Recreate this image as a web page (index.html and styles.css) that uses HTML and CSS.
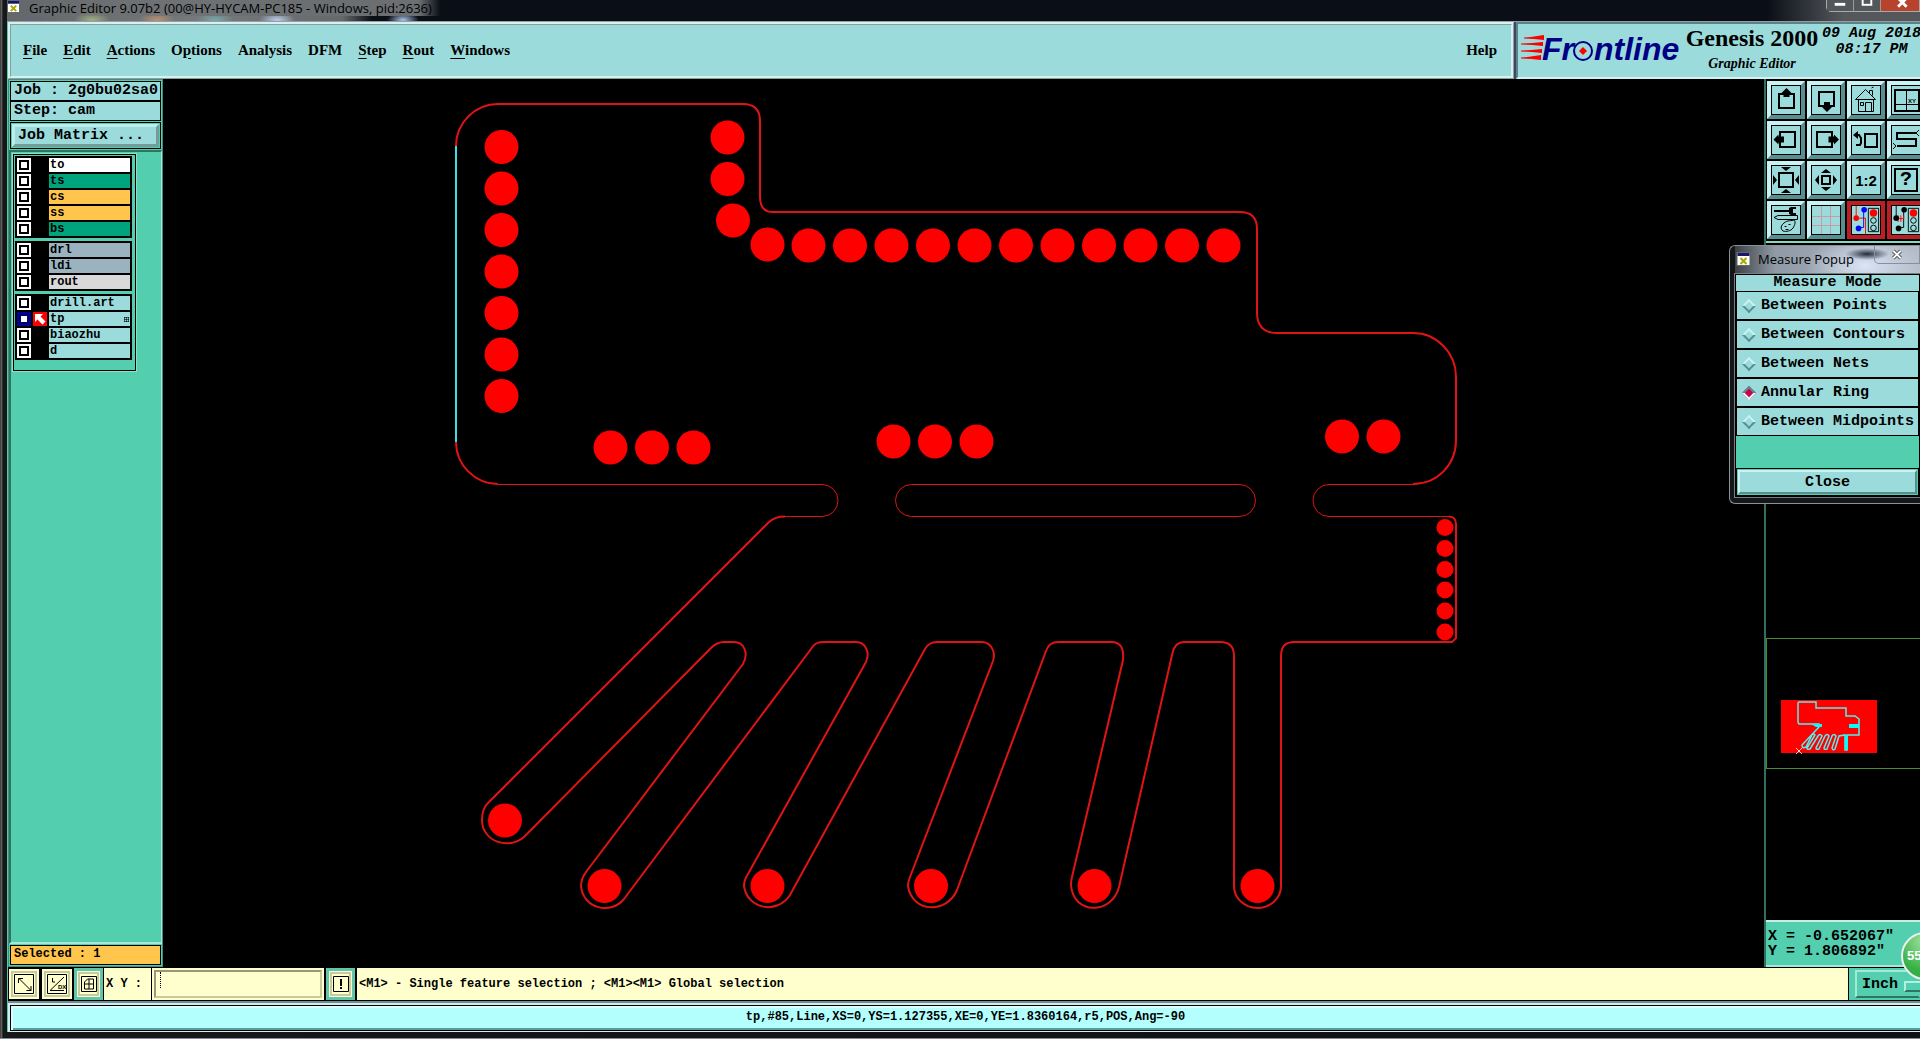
FILE: index.html
```
<!DOCTYPE html>
<html lang="en">
<head>
  <meta charset="UTF-8">
  <meta name="viewport" content="width=device-width, initial-scale=1.0">
  <title>Graphic Editor 9.07b2</title>
  <link rel="stylesheet" href="styles.css">
</head>
<body>
  <div class="window">
    <div class="title-bar">
      <svg class="app-icon" viewBox="0 0 14 14"><rect x="0.5" y="0.5" width="13" height="13" fill="#fff" stroke="#666"/><rect x="1" y="1" width="12" height="3" fill="#16166e"/><path d="M4 6l6 6M10 6l-6 6" stroke="#a8a800" stroke-width="2"/></svg>
      <span class="title">Graphic Editor 9.07b2 (00@HY-HYCAM-PC185 - Windows, pid:2636)</span>
      <div class="window-buttons">
        <button aria-label="Minimize"><svg viewBox="0 0 27 11"><rect x="8" y="3" width="11" height="3" fill="#fff"/></svg></button>
        <button aria-label="Maximize"><svg viewBox="0 0 27 11"><rect x="9" y="-3" width="9" height="8" fill="none" stroke="#fff" stroke-width="2"/></svg></button>
        <button class="window-close" aria-label="Close window"><svg viewBox="0 0 40 11"><path d="M18-2l9 9M27-2l-9 9" stroke="#fff" stroke-width="3"/></svg></button>
      </div>
    </div>

    <div class="frame">
      <header class="top">
        <nav class="menu">
          <button><u>F</u>ile</button>
          <button><u>E</u>dit</button>
          <button><u>A</u>ctions</button>
          <button>O<u>p</u>tions</button>
          <button>Analysis</button>
          <button>DFM</button>
          <button><u>S</u>tep</button>
          <button><u>R</u>out</button>
          <button><u>W</u>indows</button>
          <button class="help">Help</button>
        </nav>
        <div class="brand">
          <svg class="logo" viewBox="0 0 164 50">
            <path d="M4 14l20-3v5zM1 20l22-2v4zM1 27l21-2v4zM1 34l20-3v5z" fill="#f00"/>
            <path d="M4 14h16M1 20h16M1 27h16M1 34h16" stroke="#f00"/>
            <text x="22" y="36">Fr</text>
            <circle cx="63" cy="27" r="9" fill="none" stroke="#000084" stroke-width="2"/>
            <path d="M63 23l4 4-4 4-4-4z" fill="#f00"/>
            <text x="74" y="36">ntline</text>
          </svg>
          <div class="product">
            <h1>Genesis 2000</h1>
            <p>Graphic Editor</p>
          </div>
          <div class="clock">09 Aug 2018<br>08:17 PM</div>
        </div>
      </header>

      <div class="work">
        <aside class="sidebar">
          <div class="job">
            <div class="field">Job : 2g0bu02sa0</div>
            <div class="field">Step: cam</div>
          </div>
          <div class="matrix"><button>Job Matrix ...</button></div>
          <div class="layer-area">
            <div class="layers">
              <div class="group">
                <label class="layer white"><input type="checkbox"><i></i><span>to</span></label>
                <label class="layer green"><input type="checkbox"><i></i><span>ts</span></label>
                <label class="layer orange"><input type="checkbox"><i></i><span>cs</span></label>
                <label class="layer orange"><input type="checkbox"><i></i><span>ss</span></label>
                <label class="layer green"><input type="checkbox"><i></i><span>bs</span></label>
              </div>
              <div class="group">
                <label class="layer gray"><input type="checkbox"><i></i><span>drl</span></label>
                <label class="layer gray"><input type="checkbox"><i></i><span>ldi</span></label>
                <label class="layer silver"><input type="checkbox"><i></i><span>rout</span></label>
              </div>
              <div class="group">
                <label class="layer"><input type="checkbox"><i></i><span>drill.art</span></label>
                <label class="layer work-layer"><input type="checkbox" checked><i><svg viewBox="0 0 14 14"><path d="M2 2h8L7.500 4.500l5 5-3 3-5-5L2 10z" fill="#fff"/></svg></i><span>tp<svg class="mark" viewBox="0 0 5 5"><path d="M0 0.500h5M0 2.500h5M0 4.500h5M0.500 0v5M2.500 0v5M4.500 0v5" stroke="#000" stroke-width="0.600"/></svg></span></label>
                <label class="layer"><input type="checkbox"><i></i><span>biaozhu</span></label>
                <label class="layer"><input type="checkbox"><i></i><span>d</span></label>
              </div>
            </div>
          </div>
          <div class="selected"><div>Selected : 1</div></div>
        </aside>

        <main class="canvas">
          <svg class="board" viewBox="163 79 1601 888">
            <g class="outline">
              <path d="M456 146C456 123 475 104 498 104H743Q760 104 760 121V197Q760 212 773 212H1240Q1257 212 1257 229V314Q1258 333 1277 333H1413C1437 333 1456 353 1456 377V440C1456 465 1437 484 1413 484"/>
              <path class="thin" d="M1413 484.500H1329A16 16 0 0 0 1329 516.500H1449"/>
              <path d="M1449 516.500Q1456 517 1456 524V638L1452 642H1294Q1281 642 1281 656V886A23.500 22 0 0 1 1234 886V656Q1234 642 1220 642H1184Q1175 642 1172.500 653L1119 887C1112 915 1073 915 1071 885Q1071 880 1072 877L1123 660C1124 650 1122 642 1111 642H1058Q1049 642 1046 651L957 890C947 914 912 913 908 886Q908 882 910 877L993 661C996 652 991 642 982 642H937Q929 642 925 649L790 895C777 915 747 909 744 886Q744 880 748 874L866 662C870 653 866 642 856 642H822Q815 642 811 649L624 899C611 915 583 909 581 886Q581 879 586 872L743 664C749 653 744 642 734 642H724Q717 642 711 648L524 837C509 850 482 842 482 820Q482 808 489 802L769 522Q775 516.500 785 516.500"/>
              <path class="thin" d="M785 516.500H822A16 16 0 0 0 822 484.500H498"/>
              <path d="M498 484C475 484 456 465 456 442"/>
              <rect class="thin" x="895.500" y="484.500" width="360" height="32" rx="16"/>
              <path class="picked" d="M456 146V442"/>
            </g>
            <g class="pads">
              <circle cx="501.500" cy="147" r="17"/><circle cx="501.500" cy="188.500" r="17"/><circle cx="501.500" cy="230" r="17"/><circle cx="501.500" cy="271.500" r="17"/><circle cx="501.500" cy="313" r="17"/><circle cx="501.500" cy="354.500" r="17"/><circle cx="501.500" cy="396" r="17"/>
              <circle cx="727.500" cy="137.500" r="17"/><circle cx="727.500" cy="179" r="17"/><circle cx="733" cy="220.500" r="17"/>
              <circle cx="767.500" cy="244.500" r="17"/><circle cx="808.500" cy="245.500" r="17"/><circle cx="850" cy="245.500" r="17"/><circle cx="891.500" cy="245.500" r="17"/><circle cx="933" cy="245.500" r="17"/><circle cx="974.500" cy="245.500" r="17"/><circle cx="1016" cy="245.500" r="17"/><circle cx="1057.500" cy="245.500" r="17"/><circle cx="1099" cy="245.500" r="17"/><circle cx="1140.500" cy="245.500" r="17"/><circle cx="1182" cy="245.500" r="17"/><circle cx="1223.500" cy="245.500" r="17"/>
              <circle cx="610.500" cy="447.500" r="17"/><circle cx="652" cy="447.500" r="17"/><circle cx="693.500" cy="447.500" r="17"/>
              <circle cx="893.500" cy="441.500" r="17"/><circle cx="935" cy="441.500" r="17"/><circle cx="976.500" cy="441.500" r="17"/>
              <circle cx="1342" cy="436.500" r="17"/><circle cx="1383.500" cy="436.500" r="17"/>
              <circle cx="1445" cy="527.500" r="8.500"/><circle cx="1445" cy="548.500" r="8.500"/><circle cx="1445" cy="569.500" r="8.500"/><circle cx="1445" cy="590" r="8.500"/><circle cx="1445" cy="611" r="8.500"/><circle cx="1445" cy="632" r="8.500"/>
              <circle cx="505" cy="820.500" r="17"/><circle cx="604.500" cy="886" r="17"/><circle cx="767.500" cy="886" r="17"/><circle cx="931" cy="886" r="17"/><circle cx="1094.500" cy="886" r="17"/><circle cx="1257.500" cy="886" r="17"/>
            </g>
          </svg>
        </main>

        <aside class="right">
          <div class="tools">
            <button aria-label="Pan up"><svg viewBox="0 0 28 28"><path class="k2" d="M7 8h15v14H7z"/><path d="M14.500 2l5 5h-2v4h-6V7h-2z"/></svg></button>
            <button aria-label="Pan down"><svg viewBox="0 0 28 28"><path class="k2" d="M7 6h15v14H7z"/><path d="M12 16h6v5h2l-5 5-5-5h2z"/></svg></button>
            <button aria-label="Home"><svg viewBox="0 0 28 28"><path class="k1" d="M3.500 13.500L13.500 3.500l10 10zM6.500 13v12.500h15V13M13.500 25V16.500h6V25M8.500 16.500h3v3h-3zM17.500 7V4.500h3v5M19.500 2l2-1"/></svg></button>
            <button aria-label="Window zoom"><svg viewBox="0 0 28 28"><path class="k2" d="M3 4h24v21H3z"/><path class="k1" d="M14.500 4v21M3 18.500h24"/><text x="16" y="17" font-size="6">XY</text></svg></button>
            <button aria-label="Pan left"><svg viewBox="0 0 28 28"><path class="k2" d="M8 6h15v15H8z"/><path d="M1.500 13.500l5-5v2H12v6H6.500v2z"/></svg></button>
            <button aria-label="Pan right"><svg viewBox="0 0 28 28"><path class="k2" d="M5 6h15v15H5z"/><path d="M27 13.500l-5-5v2h-5.500v6H22v2z"/></svg></button>
            <button aria-label="Previous view"><svg viewBox="0 0 28 28"><path class="k2" d="M13 8h12v13H13zM4 19h4l1-2v-5l-2-3H4"/><path d="M1 9l5-4v8z"/></svg></button>
            <button aria-label="Serpentine"><svg viewBox="0 0 28 28"><path class="k2" d="M24 7H5v6h19v7H5"/><path class="k1" d="M27 4l-3 3 3 3M1 17l3 3-3 3"/></svg></button>
            <button aria-label="Zoom in"><svg viewBox="0 0 28 28"><path class="k2" d="M7 7h14v14H7z"/><path d="M9 1h10l-5 4zM9 27h10l-5-4zM1 9l4 5-4 5zM27 9l-4 5 4 5z"/></svg></button>
            <button aria-label="Zoom out"><svg viewBox="0 0 28 28"><path class="k2" d="M10 10h8v8h-8z"/><path d="M9 7h10l-5-4zM9 21h10l-5 4zM7 9v10l-4-5zM21 9v10l4-5z"/></svg></button>
            <button class="ratio">1:2</button>
            <button class="query"><span>?</span></button>
            <button aria-label="Setup"><svg viewBox="0 0 28 28"><path d="M2 4h16v2H2zM17 2l2-1h5v2h-3v4h3v2h-5l-2-1z"/><path class="k1" d="M2 11.500l4-2h19.500v4H6z"/><path class="k1" d="M12 17c3-3 8-2 10-3 2 1 1 5-1 8-2 3-7 4-10 3-3-2-2-6 1-8zM12.500 20.500h2M16.500 18.500h2M13.500 23.500h3"/></svg></button>
            <button aria-label="Grid"><svg viewBox="0 0 28 28"><path d="M9.500 0v28M18.500 0v28M0 10.500h28M0 19.500h28" stroke="#c99ba6"/></svg></button>
            <button class="hot" aria-label="Net check"><svg viewBox="0 0 30 30"><path d="M4.500 0v13h10v17" fill="none" stroke="#f00"/><path d="M12.500 5v18H7" fill="none" stroke="#00f"/><circle cx="4.500" cy="13" r="3" fill="#f00"/><circle cx="13" cy="4" r="3" fill="#00f"/><circle cx="7" cy="24" r="3" fill="#00f"/><path class="k1" d="M17.500 2.500h11v25h-11z"/><circle cx="23" cy="7.500" r="4" fill="#f00"/><circle class="k1" cx="23" cy="15.500" r="3"/><circle class="k1" cx="23" cy="23.500" r="3"/></svg></button>
            <button class="hot" aria-label="Drc check"><svg viewBox="0 0 30 30"><path class="k1" d="M4.500 0v13M12.500 5v18H7"/><path d="M4 13.500h9M6.500 10v7M9.500 10v7M12.500 10v3" stroke="#f00" fill="none"/><circle cx="4.500" cy="13" r="3"/><circle cx="13" cy="4" r="3"/><circle cx="7" cy="24" r="3"/><path class="k1" d="M17.500 2.500h11v25h-11z"/><circle cx="23" cy="7.500" r="4" fill="#f00"/><circle class="k1" cx="23" cy="15.500" r="3"/><circle class="k1" cx="23" cy="23.500" r="3"/></svg></button>
          </div>
          <div class="overview">
            <div class="map">
              <svg viewBox="0 0 96 53">
                <path d="M0 0h96v53H0z" fill="#f00"/>
                <path d="M18 2h17v6h30v8h9l4 3v16H66v15h-2V35l-6 1-4 13q-2 2-3-1l4-12q-2-3-4 0l-5 13q-3 1-3-1l5-12q-2-3-4 0l-6 13q-3 1-3-1l6-12q-2-3-4 0l-8 13q-3 1-3-1l8-13q-1-2-3 0L25 47q-4 2-4-2l17-18v-3H18l-1-2V3z" fill="none" stroke="#5ee" stroke-width="1.500"/>
                <path d="M30 24h11v3h-6M68 24h10v4H68zM64 35h3v15h-3z" fill="#0ff"/>
                <path d="M15 48l6 6M21 48l-6 6" stroke="#fff" stroke-width="0.800"/>
              </svg>
            </div>
          </div>
          <div class="coords">X = -0.652067"<br>Y = 1.806892"</div>
        </aside>
      </div>

      <div class="command">
        <button class="cmd" aria-label="Snap"><svg viewBox="0 0 20 20"><path class="k1" d="M0.500 0.500h19v19H0.500zM5 4.500l12 12M4.500 9V4.500H9M17 12v4.500h-4.500"/></svg></button>
        <button class="cmd" aria-label="Angle"><svg viewBox="0 0 20 20"><path class="k1" d="M0.500 0.500h19v19H0.500zM17 3L3 16.500h14M5.500 4v4H8"/><text x="11" y="15" font-size="6">DX</text></svg></button>
        <button class="cmd framed" aria-label="Grid snap"><svg viewBox="0 0 16 16"><path class="k1" d="M0.500 0.500h15v15H0.500zM3.500 6l3-3h6v10h-9zM8 3v10M3.500 8h9"/></svg></button>
        <label class="xy" for="xy">X Y :</label>
        <div class="entry"><input id="xy" type="text"><i class="caret"></i></div>
        <button class="cmd framed bang" aria-label="Interrupt"><svg viewBox="0 0 16 16"><path class="k1" d="M0.500 0.500h15v15H0.500z"/><path d="M7 3h2v7H7zM7 11h2v2H7z"/></svg></button>
        <div class="message">&lt;M1&gt; - Single feature selection ; &lt;M1&gt;&lt;M1&gt; Global selection</div>
        <div class="unit"><select aria-label="Units"><option>Inch</option><option>MM</option></select></div>
      </div>

      <footer class="status"><div>tp,#85,Line,XS=0,YS=1.127355,XE=0,YE=1.8360164,r5,POS,Ang=-90</div></footer>
    </div>

    <section class="popup">
      <div class="popup-title">
        <svg class="app-icon" viewBox="0 0 14 14"><rect x="0.500" y="0.500" width="13" height="13" fill="#fff" stroke="#666"/><rect x="1" y="1" width="12" height="3" fill="#16166e"/><path d="M4 6l6 6M10 6l-6 6" stroke="#a8a800" stroke-width="2"/></svg>
        <span>Measure Popup</span>
        <button aria-label="Close popup"><svg viewBox="0 0 12 12"><path d="M2 2l8 8M10 2l-8 8" stroke="#555" stroke-width="4"/><path d="M2 2l8 8M10 2l-8 8" stroke="#fff" stroke-width="2"/></svg></button>
      </div>
      <div class="popup-body">
        <h2>Measure Mode</h2>
        <label class="mode"><input type="radio" name="mode">Between Points</label>
        <label class="mode"><input type="radio" name="mode">Between Contours</label>
        <label class="mode"><input type="radio" name="mode">Between Nets</label>
        <label class="mode"><input type="radio" name="mode" checked>Annular Ring</label>
        <label class="mode"><input type="radio" name="mode">Between Midpoints</label>
        <div class="popup-close"><button>Close</button></div>
      </div>
    </section>

    <div class="bubble">55</div>
  </div>
</body>
</html>
```
FILE: styles.css
```
* {
  box-sizing: border-box;
}
body {
  margin: 0;
  background: #000;
  color: #000;
  font-family: "Liberation Mono", monospace;
  font-size: 15px;
  font-weight: bold;
}
button,
input,
select {
  margin: 0;
  padding: 0;
  border: none;
  background: none;
  color: inherit;
  font: inherit;
}
svg {
  display: block;
}
.k1,
.k2 {
  fill: none;
  stroke: #000;
  stroke-width: 1;
}
.k2 {
  stroke-width: 2;
}
.window {
  position: relative;
  height: 100vh;
  min-height: 600px;
  overflow: hidden;
  display: flex;
  flex-direction: column;
  padding: 0 0 6px 7px;
  background: linear-gradient(to right, #111 0, #777 1px, #151719 3px, #0d1014 100%);
  border-bottom: 1px solid #889;
}

/* title bar */
.title-bar {
  display: flex;
  gap: 9px;
  height: 22px;
  color: #000;
  font: 13px/16px "Open Sans", sans-serif;
  border-bottom: 1px solid #9a9da0;
  background:
    radial-gradient(ellipse 16px 9px at 25px 20px, #667, transparent),
    radial-gradient(ellipse 18px 8px at 85px 20px, #9fae83, transparent),
    radial-gradient(ellipse 18px 8px at 150px 20px, #b98f74, transparent),
    radial-gradient(ellipse 18px 8px at 208px 20px, #74a9a8, transparent),
    radial-gradient(ellipse 18px 8px at 270px 20px, #b9cbe8, transparent),
    radial-gradient(ellipse 16px 8px at 396px 20px, #a9c4ea, transparent),
    linear-gradient(to right, #64676a 0, #777a7c 200px, #66696c 335px, #0a0e16 365px, #0a0e16 92%, #54585c 96%);
}
.title {
  padding: 0 8px;
  margin: 0 -8px;
  background: linear-gradient(to right, transparent, #6c6f72 60%, #6c6f72 95%, transparent);
  height: 16px;
}
.app-icon {
  width: 13px;
  height: 13px;
}
.window-buttons {
  display: flex;
  height: 12px;
  margin-left: auto;
  border: 1px solid #aaa;
  border-top: none;
  border-radius: 0 0 0 5px;
}
.window-buttons button {
  width: 27px;
  border-right: 1px solid #999;
  background: #54575a;
}
.window-buttons .window-close {
  width: 38px;
  border: none;
  background: #b8432c;
}

.frame {
  flex: 1;
  min-height: 0;
  display: flex;
  flex-direction: column;
  border-left: 1px solid #56c9a9;
}

/* menu and brand */
.top {
  display: flex;
  gap: 2px;
  height: 57px;
  background: #446;
}
.menu {
  flex: 1;
  display: flex;
  align-items: center;
  gap: 16px;
  padding: 0 14px 2px 12px;
  background: #9cdbdb;
  border: 3px ridge #d5f2f2;
}
.menu button {
  font: bold 15px/18px "Liberation Serif", serif;
}
.menu u {
  text-underline-offset: 3px;
}
.menu .help {
  margin-left: auto;
}
.brand {
  display: flex;
  width: 404px;
  padding-left: 2px;
  overflow: hidden;
  white-space: nowrap;
  background: #9cdbdb;
  border: 2px solid #d5f2f2;
  border-top-color: #578487;
  border-left-color: #578487;
  border-right: none;
}
.logo {
  flex: none;
  width: 164px;
  height: 50px;
}
.logo text {
  fill: #000084;
  font: italic bold 32px "Liberation Sans", sans-serif;
}
.product {
  flex: none;
  width: 136px;
  text-align: center;
}
.product h1 {
  margin: 0;
  font: bold 24px/28px "Liberation Serif", serif;
}
.product p {
  margin: 0;
  font: italic bold 14px/24px "Liberation Serif", serif;
}
.clock {
  flex: none;
  width: 103px;
  padding-top: 2px;
  font-style: italic;
  line-height: 16px;
  text-align: center;
}

/* working area */
.work {
  flex: 1;
  min-height: 0;
  display: flex;
  background: #000;
}
.sidebar {
  width: 155px;
  display: flex;
  flex-direction: column;
  background: #53ceae;
  border: 1px solid #478b7b;
}
.job {
  padding: 1px;
}
.field {
  height: 20px;
  padding-left: 3px;
  background: #9cdbdb;
  border: 1px solid #000;
  line-height: 17px;
}
.matrix {
  height: 27px;
  margin: 0 1px;
  padding: 1px;
  border: 1px solid #000;
}
.matrix button {
  width: 100%;
  height: 23px;
  padding-left: 3px;
  background: #9cdbdb;
  border: 3px outset #b9eeee;
  line-height: 17px;
  text-align: left;
}
.layer-area {
  flex: 1;
  margin-top: 1px;
  padding: 2px;
  border-top: 2px solid #2d7561;
  border-left: 2px solid #2d7561;
  border-right: 1px solid #a4e8d7;
  border-bottom: 2px solid #a4e8d7;
}
.layers {
  width: 123px;
  padding: 1px 3px 7px 1px;
  border: 1px solid #000;
  outline: 1px solid #91dfca;
}
.group {
  width: 117px;
  margin-bottom: 3px;
  padding: 2px 2px 0;
  background: #000;
}
.layer {
  display: flex;
  gap: 2px;
  height: 16px;
  padding-bottom: 2px;
  font-size: 12px;
  line-height: 14px;
}
.layer input {
  flex: none;
  width: 14px;
  height: 14px;
  appearance: none;
  background: #fff;
  border: 2px solid #fff;
  box-shadow: inset 0 0 0 2px #000;
}
.layer i {
  flex: none;
  width: 14px;
  height: 14px;
}
.layer span {
  flex: 1;
  display: flex;
  align-items: center;
  justify-content: space-between;
  padding: 0 1px;
  background: #9cdbdb;
}
.mark {
  width: 5px;
  height: 5px;
}
.white span {
  background: #fff;
}
.green span {
  background: #00a47c;
}
.orange span {
  background: #ffc54d;
}
.gray span {
  background: #9bb3bf;
}
.silver span {
  background: #d9d9d9;
}
.work-layer input {
  border-color: #000099;
  box-shadow: inset 0 0 0 2px #000066;
}
.work-layer i {
  background: #f00;
}
.selected {
  padding: 1px;
  font-size: 12px;
}
.selected div {
  height: 20px;
  padding-left: 3px;
  background: #ffc54d;
  border: 1px solid #000;
  line-height: 17px;
}
.canvas {
  flex: 1;
  min-width: 0;
}
.board {
  width: 100%;
  height: 100%;
}
.outline {
  fill: none;
  stroke: #e01414;
  stroke-width: 2;
}
.outline .thin {
  stroke-width: 1;
}
.outline .picked {
  stroke: #46d9dd;
}
.pads {
  fill: #f00;
}

/* right column */
.right {
  width: 156px;
  display: flex;
  flex-direction: column;
  overflow: hidden;
  border-left: 2px solid #316f61;
}
.tools {
  display: grid;
  grid-template-columns: repeat(4, 38px);
  gap: 2px;
  width: 160px;
  padding: 2px 1px;
  border-bottom: 2px solid #83d9c1;
}
.tools button {
  display: flex;
  align-items: center;
  justify-content: center;
  width: 38px;
  height: 38px;
  background: #9cdbdb;
  border: 4px solid;
  border-color: #c9f3f3 #578f90 #578f90 #c9f3f3;
}
.tools svg {
  flex: none;
  width: 30px;
  height: 30px;
  border: 1px solid #000;
}
.tools text {
  font-family: "Liberation Sans", sans-serif;
}
.tools .ratio,
.tools .query {
  outline: 1px solid #000;
  outline-offset: -5px;
}
.tools .ratio {
  font: bold 15px "Liberation Sans", sans-serif;
}
.query span {
  width: 24px;
  height: 24px;
  border: 2px solid #000;
  font-size: 20px;
  line-height: 20px;
}
.tools .hot {
  border-color: #bb1e24;
}
.overview {
  flex: 1;
  display: flex;
  flex-direction: column;
  justify-content: flex-end;
  padding-bottom: 151px;
}
.map {
  height: 131px;
  padding: 61px 14px 0;
  border: 1px solid #4c8a2e;
  border-right: none;
}
.map svg {
  width: 96px;
  height: 53px;
  overflow: visible;
}
.coords {
  height: 47px;
  padding: 7px 0 0 2px;
  background: #53ceae;
  border-top: 2px solid #c3efe4;
  border-bottom: 2px solid #a4e8d7;
  line-height: 15px;
  white-space: nowrap;
}

/* command row */
.command {
  display: flex;
  height: 34px;
  gap: 1px;
  padding-bottom: 1px;
  background: #000;
  border-top: 1px solid #000;
  font-size: 12px;
}
.cmd {
  display: flex;
  align-items: center;
  justify-content: center;
  width: 32px;
  background: #ffffce;
  border: 1px solid #000;
  outline: 2px solid #c9c9a0;
  outline-offset: -5px;
}
.cmd svg {
  width: 20px;
  height: 20px;
}
.cmd text {
  font-family: "Liberation Sans", sans-serif;
}
.framed {
  width: 29px;
  border: 3px solid #5fc6ac;
  outline-offset: -6px;
}
.framed svg {
  width: 16px;
  height: 16px;
}
.xy {
  width: 47px;
  padding-left: 2px;
  background: #ffffce;
  line-height: 32px;
}
.entry {
  position: relative;
  width: 172px;
  padding: 2px;
  background: #ffffce;
}
.entry input {
  width: 100%;
  height: 100%;
  padding-left: 6px;
  border: 2px solid;
  border-color: #98987d #c9c9a0 #c9c9a0 #98987d;
}
.caret {
  position: absolute;
  top: 4px;
  left: 8px;
  height: 16px;
  border-left: 1px dotted #000;
}
.bang {
  margin: 0 1px;
}
.message {
  flex: 1;
  min-width: 0;
  overflow: hidden;
  padding-left: 2px;
  background: #ffffce;
  line-height: 32px;
  white-space: nowrap;
}
.unit {
  position: relative;
  width: 71px;
  padding: 2px 0 2px 6px;
  background: #53ceae;
}
.unit::after {
  content: "";
  position: absolute;
  top: 13px;
  right: -2px;
  width: 14px;
  height: 7px;
  border: 2px solid;
  border-color: #b5efe0 #2d7561 #2d7561 #b5efe0;
}
.unit select {
  width: 100%;
  height: 28px;
  padding-left: 5px;
  appearance: none;
  border: 2px solid;
  border-color: #a4e8d7 #53ceae #2d7561 #a4e8d7;
  font-size: 15px;
}

/* status line */
.status {
  height: 31px;
  padding: 2px 0 2px 2px;
  background: #cdeff0;
  border-top: 2px solid #6f8f92;
  font-size: 12px;
  text-align: center;
}
.status div {
  height: 26px;
  background: #b3fffe;
  border: 1px solid #000;
  border-right: none;
  box-shadow: inset 2px 2px #dcffff, inset 0 -2px #5d9c9e;
  line-height: 22px;
}

/* measure popup */
.popup {
  position: absolute;
  top: 245px;
  right: 0;
  width: 191px;
  padding: 0 0 6px 5px;
  background: #14171a;
  border: 1px solid #8b9093;
  border-right: none;
  border-radius: 6px 0 0 6px;
}
.popup-title {
  display: flex;
  align-items: center;
  gap: 7px;
  height: 28px;
  padding-bottom: 3px;
  color: #000;
  font: 13px/24px "Open Sans", sans-serif;
  background:
    radial-gradient(ellipse 22px 6px at 132px 8px, #222b3a, transparent),
    radial-gradient(ellipse 60px 30px at 130px 20px, #dbe4f5, transparent),
    linear-gradient(to right, #3c4043, #909aa6 40px, #b4bcc8);
}
.popup-title .app-icon {
  width: 15px;
  height: 14px;
  margin-left: 1px;
}
.popup-title button {
  display: flex;
  justify-content: center;
  width: 46px;
  height: 19px;
  margin: -8px 0 0 auto;
  padding-top: 4px;
  border: 1px solid #888f99;
  border-top: none;
  border-radius: 0 0 0 5px;
}
.popup-title button svg {
  width: 12px;
  height: 11px;
}
.popup-body {
  background: #53ceae;
  border: 1px solid #000;
  outline: 1px solid #777d80;
}
.popup h2 {
  height: 16px;
  margin: 0;
  background: #9cdbdb;
  font-size: 15px;
  line-height: 16px;
  text-align: center;
}
.mode {
  display: flex;
  align-items: center;
  gap: 7px;
  height: 29px;
  padding-left: 7px;
  background: #9cdbdb;
  border: 1px solid #000;
  white-space: nowrap;
}
.mode input {
  flex: none;
  width: 10px;
  height: 10px;
  appearance: none;
  border: 2px solid;
  border-color: #c9f3f3 #578f90 #578f90 #c9f3f3;
  transform: rotate(45deg);
}
.mode input:checked {
  background: #cf0047;
  border-color: #578f90 #e0fafa #e0fafa #578f90;
}
.popup-close {
  height: 28px;
  margin-top: 32px;
  padding: 1px;
  border: 1px solid #000;
}
.popup-close button {
  width: 100%;
  height: 24px;
  background: #9cdbdb;
  border: 2px solid;
  border-color: #c9f3f3 #578f90 #578f90 #c9f3f3;
}

/* floating speed bubble */
.bubble {
  position: absolute;
  right: -29px;
  bottom: 58px;
  width: 48px;
  height: 48px;
  padding-left: 4px;
  border: 2px solid #eee;
  border-radius: 50%;
  background: radial-gradient(circle at 50% 15%, #9fe39f, #35b044 70%);
  color: #fff;
  font: bold 13px/44px "Liberation Sans", sans-serif;
}
```
